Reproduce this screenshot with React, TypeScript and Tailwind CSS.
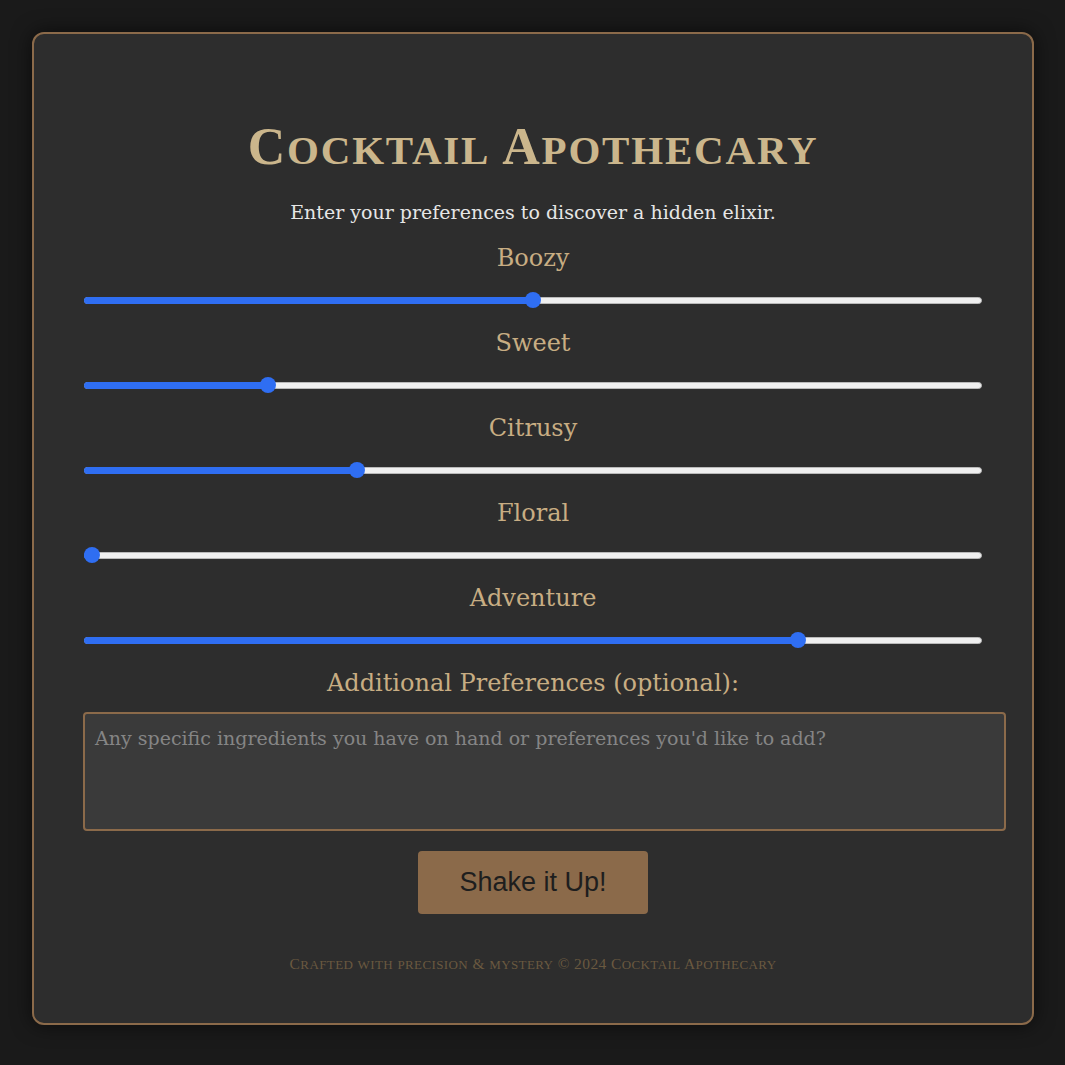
import React, { useState } from 'react';

const sliders = [
  { l: 'Boozy', v: 0.5 },
  { l: 'Sweet', v: 0.2 },
  { l: 'Citrusy', v: 0.3 },
  { l: 'Floral', v: 0 },
  { l: 'Adventure', v: 0.8 },
];

// fake small caps: capitals/digits at full size, lowercase drawn as smaller capitals
const Caps: React.FC<{ text: string; big: string; small: string }> = ({ text, big, small }) => {
  const runs = text.match(/[a-z]+|[^a-z]+/g) || [];
  return (
    <>
      {runs.map((r, i) =>
        /[a-z]/.test(r) ? (
          <span key={i} className={small}>{r.toUpperCase()}</span>
        ) : (
          <span key={i} className={big}>{r}</span>
        )
      )}
    </>
  );
};

const Slider: React.FC<{ label: string; value: number }> = ({ label, value }) => (
  <div className="h-[85px] flex flex-col items-center">
    <div className="h-[30px] leading-[30px] text-[24px] text-[#c8ad83] font-['DejaVu_Serif',serif]">{label}</div>
    <div className="relative mt-[19px] h-[16px] w-full">
      <div className="absolute left-0 right-0 top-[5px] h-[7px] rounded-full bg-[#efefef] border border-[#b9b9b9]" />
      <div
        className="absolute left-0 top-[5px] h-[7px] rounded-full bg-[#2f6ef2]"
        style={{ width: `calc(${value} * (100% - 16px) + 8px)` }}
      />
      <div
        className="absolute top-0 h-[16px] w-[16px] rounded-full bg-[#2f6ef2]"
        style={{ left: `calc(${value} * (100% - 16px))` }}
      />
    </div>
  </div>
);

export default function App() {
  const [txt, setTxt] = useState('');
  return (
    <div className="min-h-screen bg-[#1a1a1a] pt-8 pb-10">
      <div className="ml-8 w-[1002px] rounded-xl border-2 border-[#8b6a4a] bg-[#2d2d2d] px-[50px] pt-[50px] pb-[49px] shadow-[0_0_20px_rgba(0,0,0,0.6)]">
        <h1 className="mt-[33px] h-[60px] text-center leading-[60px] font-bold text-[#cbb68c] tracking-[1.8px] font-['Liberation_Serif',serif]">
          <Caps text="Cocktail Apothecary" big="text-[52px]" small="text-[41px]" />
        </h1>
        <p className="mt-[21px] h-[28px] text-center text-[19px] leading-[28px] text-[#e6e6e6] font-['DejaVu_Serif',serif]">
          Enter your preferences to discover a hidden elixir.
        </p>
        <div className="mt-[17px]">
          {sliders.map(s => (
            <Slider key={s.l} label={s.l} value={s.v} />
          ))}
        </div>
        <div className="h-[30px] text-center text-[24px] leading-[30px] text-[#c8ad83] font-['DejaVu_Serif',serif]">
          Additional Preferences (optional):
        </div>
        <textarea
          value={txt}
          onChange={e => setTxt(e.target.value)}
          placeholder="Any specific ingredients you have on hand or preferences you'd like to add?"
          className="mt-[14px] block h-[119px] w-[923px] -ml-px resize-none rounded border-2 border-[#8b6a4a] bg-[#3a3a3a] px-[10px] py-[12px] text-[19px] leading-[24px] text-[#e6e6e6] placeholder:text-[#858585] outline-none font-['DejaVu_Serif',serif]"
        />
        <div className="mt-[20px] flex justify-center">
          <button className="h-[63px] w-[230px] rounded bg-[#8b6a4a] text-[27px] text-[#1e1e1e] font-['Liberation_Sans',Arial,sans-serif]">
            Shake it Up!
          </button>
        </div>
        <div className="mt-[40px] h-[20px] text-center leading-[20px] text-[#6a5940] tracking-[0.4px] font-['Liberation_Serif',serif]">
          <Caps text="Crafted with precision & mystery © 2024 Cocktail Apothecary" big="text-[15.5px]" small="text-[13px]" />
        </div>
      </div>
    </div>
  );
}
